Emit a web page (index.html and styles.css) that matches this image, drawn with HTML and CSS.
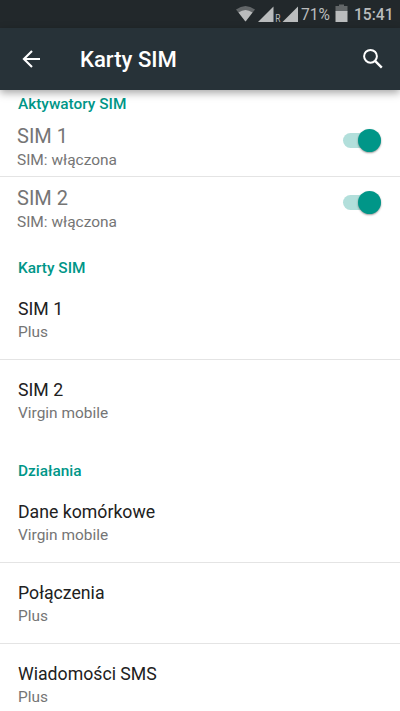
FILE: index.html
```html
<!DOCTYPE html>
<html lang="pl">
<head>
<meta charset="utf-8">
<title>Karty SIM</title>
<link rel="stylesheet" href="styles.css">
</head>
<body>
<div class="screen">
  <div class="status">
    <svg class="indicators" width="80" height="28" viewBox="0 0 80 28">
      <path d="M0 9.500Q9.500 2.500 19 9.500L9.500 21.500Z" fill="#626668"/>
      <path d="M2.500 12.600Q9.500 7.400 16.500 12.600L9.500 21.500Z" fill="#babcbd"/>
      <path d="M37.500 6.500V22H22Z" fill="#babcbd"/>
      <path d="M62 6.500V22H46.500Z" fill="#babcbd"/>
      <text x="39.300" y="22" textLength="5.200" lengthAdjust="spacingAndGlyphs" class="roaming">R</text>
    </svg>
    <span class="percent">71%</span>
    <svg class="battery" width="13" height="28" viewBox="0 0 13 28">
      <path d="M0.500 6H4V4.500H9V6H12.500V11.500H0.500Z" fill="#626668"/>
      <path d="M0.500 11H12.500V22H0.500Z" fill="#babcbd"/>
    </svg>
    <span class="clock">15:41</span>
  </div>
  <header class="appbar">
    <svg class="back" width="20" height="20" viewBox="0 0 20 20">
      <path d="M19 10H3M11 1.900L2.900 10L11 18.100" fill="none" stroke="#fff" stroke-width="2.100"/>
    </svg>
    <h1>Karty SIM</h1>
    <svg class="search" width="22" height="22" viewBox="0 0 22 22" fill="none" stroke="#fff">
      <circle cx="8.500" cy="8.300" r="6.400" stroke-width="2"/>
      <path d="M13 12.800L19.800 19.600" stroke-width="2.400"/>
    </svg>
  </header>
  <main>
    <h2 class="first">Aktywatory SIM</h2>
    <section class="activators">
      <div class="row">
        <div><div class="name">SIM 1</div><div class="summary">SIM: włączona</div></div>
        <div class="switch"><div class="thumb"></div></div>
      </div>
      <div class="row">
        <div><div class="name">SIM 2</div><div class="summary">SIM: włączona</div></div>
        <div class="switch"><div class="thumb"></div></div>
      </div>
    </section>
    <h2>Karty SIM</h2>
    <section class="items">
      <div class="row"><div class="name">SIM 1</div><div class="summary">Plus</div></div>
      <div class="row"><div class="name">SIM 2</div><div class="summary">Virgin mobile</div></div>
    </section>
    <h2>Działania</h2>
    <section class="items">
      <div class="row"><div class="name">Dane komórkowe</div><div class="summary">Virgin mobile</div></div>
      <div class="row"><div class="name">Połączenia</div><div class="summary">Plus</div></div>
      <div class="row"><div class="name">Wiadomości SMS</div><div class="summary">Plus</div></div>
    </section>
  </main>
</div>
</body>
</html>
```
FILE: styles.css
```css
* { box-sizing: border-box; }
body { margin: 0; font-family: Roboto, sans-serif; background: #fff; }
.screen { height: 711px; overflow: hidden; }
.status {
  display: flex;
  align-items: center;
  height: 28px;
  padding-left: 236px;
  background: #22282b;
  color: #babcbd;
  font-size: 15.6px;
  line-height: 28px;
}
.indicators, .battery { flex: none; }
.roaming { font-size: 10.5px; fill: #babcbd; }
.percent { width: 34px; margin-left: -15px; padding-top: 1px; }
.clock { margin-left: 6px; padding-top: 1px; font-weight: 500; }
.appbar {
  position: relative;
  display: flex;
  align-items: center;
  height: 62px;
  padding: 0 16px 0 20.5px;
  background: #273238;
  color: #fff;
  box-shadow: 0 3px 8px rgba(0, 0, 0, .35);
}
.appbar h1 {
  margin: 0 0 1px 39.5px;
  font-size: 22.1px;
  font-weight: 500;
  line-height: 28px;
}
.search { margin-left: auto; }
main { padding-top: 3px; }
h2 {
  height: 39.5px;
  margin: 0;
  padding: 19px 18px 0;
  color: #009688;
  font-size: 15.4px;
  font-weight: 500;
  line-height: 23px;
}
h2.first { height: 22px; padding-top: 0; }
.name { font-size: 17.7px; line-height: 22px; color: #212121; }
.summary { font-size: 15.45px; line-height: 24px; color: #757575; }
.row + .row { border-top: 1px solid #e4e4e4; }
.activators .row {
  display: flex;
  justify-content: space-between;
  height: 62px;
  padding: 9px 19px 0 17px;
}
.activators .row:first-child { height: 61px; }
.activators .name { font-size: 20px; line-height: 24px; color: #757575; }
.switch {
  display: flex;
  align-items: center;
  justify-content: flex-end;
  width: 38px;
  height: 15px;
  margin-top: 9px;
  border-radius: 8px;
  background: #b2dfdb;
}
.thumb {
  flex: none;
  width: 23px;
  height: 23px;
  border-radius: 50%;
  background: #009688;
  box-shadow: 0 1px 2px rgba(0, 0, 0, .4);
}
.items .row { height: 81.5px; padding: 20.5px 18px 0; }
.items .row + .row { padding-top: 19px; }
```
